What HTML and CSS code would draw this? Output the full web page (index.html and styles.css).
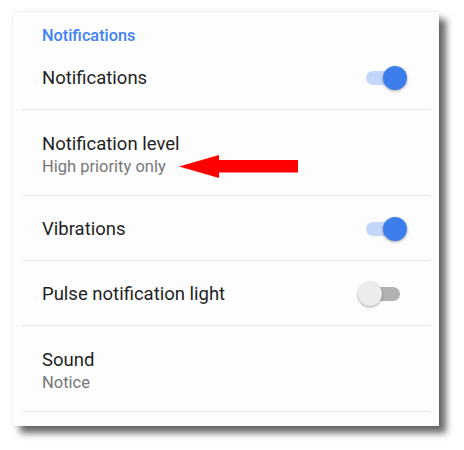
FILE: index.html
```html
<!DOCTYPE html>
<html>
<head>
<meta charset="utf-8">
<link rel="stylesheet" href="styles.css">
</head>
<body>
<div class="card">
  <div class="header">Notifications</div>
  <div class="row">
    <div class="text"><div class="title">Notifications</div></div>
    <div class="switch on"><div class="thumb"></div></div>
  </div>
  <div class="row two">
    <div class="text"><div class="title">Notification level</div><div class="sub">High priority only</div></div>
  </div>
  <div class="row">
    <div class="text"><div class="title">Vibrations</div></div>
    <div class="switch on"><div class="thumb"></div></div>
  </div>
  <div class="row">
    <div class="text"><div class="title">Pulse notification light</div></div>
    <div class="switch off"><div class="thumb"></div></div>
  </div>
  <div class="row two">
    <div class="text"><div class="title">Sound</div><div class="sub">Notice</div></div>
  </div>
</div>
<svg class="arrow" width="464" height="450" viewBox="0 0 464 450">
  <polygon points="179,166.5 219,155 219,160 298,160 298,172.5 219,172.5 219,178" fill="#ff0000"/>
</svg>
</body>
</html>
```
FILE: styles.css
```css
html, body {
  margin: 0;
  padding: 0;
  background: #ffffff;
}
body {
  position: relative;
  width: 464px;
  height: 450px;
  overflow: hidden;
  font-family: Roboto, "Liberation Sans", sans-serif;
}
.card {
  margin: 12px 0 0 13px;
  width: 426px;
  background: #fdfdfd;
  box-sizing: border-box;
  padding: 0 9px 14px 9px;
  box-shadow: 7px 7px 7px rgba(0, 0, 0, 0.6), 0 0 3px rgba(0, 0, 0, 0.12);
}
.header {
  padding: 14px 0 0 20px;
  height: 19px;
  line-height: 20px;
  font-size: 16.3px;
  font-weight: 500;
  color: #3f83f2;
}
.row {
  display: flex;
  align-items: center;
  justify-content: space-between;
  padding: 21px 30px 19px 20px;
  border-bottom: 1px solid #e8e8e8;
}
.row.two {
  padding: 22px 30px 17px 20px;
}
.title {
  font-size: 18.5px;
  line-height: 24px;
  color: #1f1f1f;
}
.sub {
  font-size: 16.5px;
  line-height: 22px;
  color: #777777;
}
.switch {
  position: relative;
  width: 34px;
  height: 14px;
  border-radius: 7px;
}
.switch.on {
  background: #c3d7fb;
}
.switch.off {
  background: #b2b2b2;
}
.thumb {
  position: absolute;
  top: -5px;
  width: 24px;
  height: 24px;
  border-radius: 50%;
  box-shadow: 0 1px 3px rgba(0, 0, 0, 0.35);
}
.switch.on .thumb {
  left: 17px;
  background: #3b7eec;
}
.switch.off .thumb {
  left: -8px;
  background: #ececec;
}
.arrow {
  position: absolute;
  left: 0;
  top: 0;
}
```
